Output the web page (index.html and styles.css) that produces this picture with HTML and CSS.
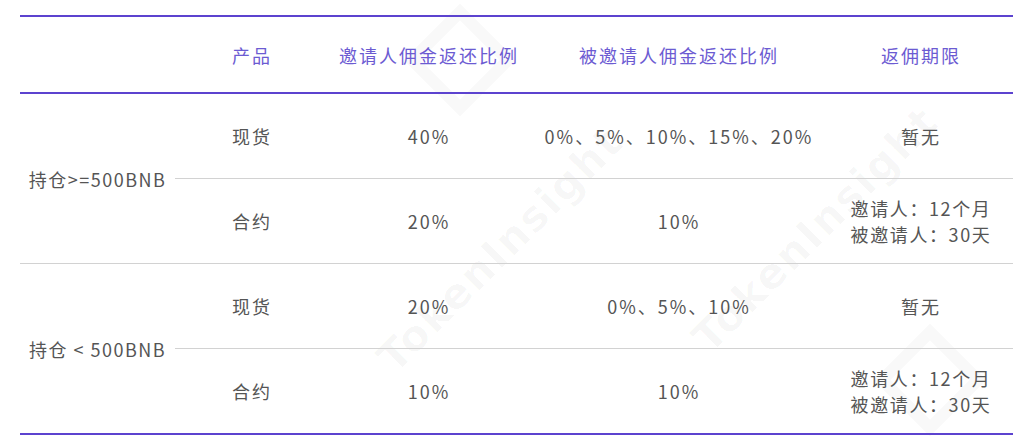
FILE: index.html
```html
<!DOCTYPE html>
<html lang="zh-CN">
<head>
<meta charset="utf-8">
<link rel="stylesheet" href="styles.css">
</head>
<body>
<div class="page">
  <table class="rebate">
    <colgroup>
      <col class="c0"><col class="c1"><col class="c2"><col class="c3"><col class="c4">
    </colgroup>
    <thead>
      <tr>
        <th></th>
        <th>产品</th>
        <th>邀请人佣金返还比例</th>
        <th>被邀请人佣金返还比例</th>
        <th>返佣期限</th>
      </tr>
    </thead>
    <tbody>
      <tr>
        <td class="tier" rowspan="2">持仓&gt;=500BNB</td>
        <td>现货</td>
        <td>40%</td>
        <td>0%、5%、10%、15%、20%</td>
        <td>暂无</td>
      </tr>
      <tr>
        <td>合约</td>
        <td>20%</td>
        <td>10%</td>
        <td class="two">邀请人：12个月<br>被邀请人：30天</td>
      </tr>
      <tr>
        <td class="tier" rowspan="2">持仓 &lt; 500BNB</td>
        <td>现货</td>
        <td>20%</td>
        <td>0%、5%、10%</td>
        <td>暂无</td>
      </tr>
      <tr>
        <td>合约</td>
        <td>10%</td>
        <td>10%</td>
        <td class="two">邀请人：12个月<br>被邀请人：30天</td>
      </tr>
    </tbody>
  </table>

  <div class="wm wm1">TokenInsight</div>
  <div class="wm wm2">TokenInsight</div>
  <div class="logo lg1"></div>
  <div class="logo lg2"></div>
</div>
</body>
</html>
```

FILE: styles.css
```css
html, body {
  margin: 0;
  padding: 0;
  background: #ffffff;
}

.page {
  position: relative;
  width: 1024px;
  height: 447px;
  overflow: hidden;
  padding-top: 15px;
  box-sizing: border-box;
}

.rebate {
  margin-left: 20px;
  width: 993px;
  border-collapse: collapse;
  table-layout: fixed;
  font-family: "Noto Sans CJK SC", "Noto Sans", sans-serif;
  font-size: 18px;
  letter-spacing: 2px;
  color: #555555;
  position: relative;
  z-index: 1;
}

.c0 { width: 155px; }
.c1 { width: 154px; }
.c2 { width: 200px; }
.c3 { width: 300px; }
.c4 { width: 184px; }

.rebate thead tr {
  border-top: 2px solid #5c43cf;
  border-bottom: 2px solid #5c43cf;
}

.rebate th {
  height: 75px;
  padding: 0;
  font-weight: 400;
  color: #6c5bd2;
  text-align: center;
  vertical-align: middle;
}

.rebate td {
  height: 84px;
  padding: 0;
  text-align: center;
  vertical-align: middle;
  border-bottom: 1px solid #d2d2d2;
}

.rebate tbody tr:last-child td,
.rebate tbody tr:nth-child(3) td.tier {
  border-bottom: 2px solid #5c43cf;
}

.rebate td.tier {
  letter-spacing: 1.5px;
}

.rebate td.two {
  line-height: 26px;
  letter-spacing: 1.6px;
}

.wm {
  position: absolute;
  z-index: 0;
  font-family: "DejaVu Sans", sans-serif;
  font-weight: 700;
  font-size: 42px;
  letter-spacing: 2px;
  color: rgba(0, 0, 0, 0.03);
  transform: rotate(-45deg);
  transform-origin: left center;
  white-space: nowrap;
}

.wm1 { left: 385px; top: 340px; }
.wm2 { left: 700px; top: 320px; }

.logo {
  position: absolute;
  z-index: 0;
  width: 56px;
  height: 56px;
  border: 12px solid rgba(0, 0, 0, 0.025);
  transform: rotate(45deg);
}

.lg1 { left: 420px; top: 20px; }
.lg2 { left: 890px; top: 340px; }
```
